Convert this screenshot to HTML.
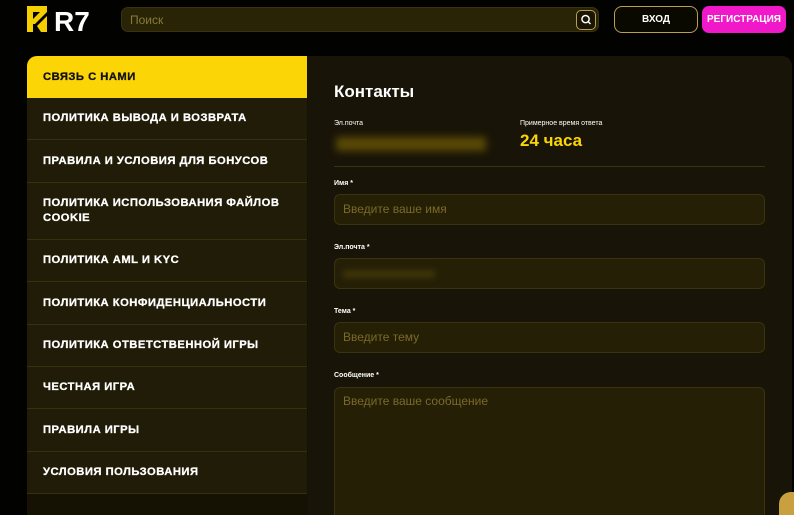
<!DOCTYPE html>
<html><head><meta charset="utf-8"><style>
*{box-sizing:border-box;margin:0;padding:0}
html{overflow:hidden;width:794px;height:515px}
body{width:794px;height:515px;overflow:hidden;background:#020200;font-family:"Liberation Sans","Noto Sans CJK SC",sans-serif;position:relative;color:#fff}
.abs{position:absolute}
.logo{left:27px;top:6px;width:66px;height:28px}
.search{left:121px;top:7px;width:478px;height:25px;border-radius:7px;background:#2a2406;border:1px solid #3a3210}
.search span{position:absolute;left:8px;top:5px;font-size:12px;color:#8a7a3a}
.sbtn{right:2px;top:2px;width:20px;height:20px;border:1px solid #b8a050;border-radius:5px;background:#1a1604}
.vhod{left:614px;top:6px;width:84px;height:27px;border:1px solid #b8a050;border-radius:8px;background:#0a0900;font-size:10px;font-weight:bold;text-align:center;line-height:25px}
.reg{left:702px;top:6px;width:84px;height:27px;border-radius:7px;background:#f018c8;font-size:10px;font-weight:bold;text-align:center;line-height:27px}
.side{left:27px;top:56px;width:281px;height:459px;background:#151204;border-radius:10px 0 0 0}
.item{position:absolute;left:0;width:280px;background:#211c07;border-bottom:1px solid #37300f;font-size:11.2px;font-weight:bold;letter-spacing:0.5px;padding-left:16px;display:flex;align-items:center;line-height:15px;-webkit-text-stroke:0.3px #fff}
.main{left:308px;top:56px;width:484px;height:459px;background:#181407;border-radius:0 10px 0 0}
.lbl{font-size:7px;font-weight:bold;color:#fff}
.inp{left:334px;width:431px;height:31px;border-radius:6px;background:#251f06;border:1px solid #3a3210;font-size:12px;color:#7a6a28;padding-left:8px;line-height:29px}
</style></head><body>
<svg class="abs logo" viewBox="0 0 66 28">
<path d="M0 0h20v6L8 18h-2v8H0z M6 6v7l7-7z" fill="#f5d000" fill-rule="evenodd"/>
<path d="M10 20l10-10v16h-6z" fill="#f5d000"/>
<text x="27" y="25" font-family="Liberation Sans" font-weight="bold" font-size="28" fill="#fff">R7</text>
</svg>
<div class="abs search"><span>Поиск</span>
<svg class="abs sbtn" viewBox="0 0 20 20"><circle cx="9.5" cy="9" r="4" stroke="#fff" stroke-width="1.6" fill="none"/><path d="M12.5 12l2.5 2.5" stroke="#fff" stroke-width="1.6"/></svg></div>
<div class="abs vhod">ВХОД</div>
<div class="abs reg">РЕГИСТРАЦИЯ</div>
<div class="abs side">
<div class="item" style="top:0;height:42px;background:#fcd506;color:#111;-webkit-text-stroke:0.3px #111;border:none;border-radius:10px 0 0 0">СВЯЗЬ С НАМИ</div>
<div class="item" style="top:42px;height:42px">ПОЛИТИКА ВЫВОДА И ВОЗВРАТА</div>
<div class="item" style="top:84px;height:43px">ПРАВИЛА И УСЛОВИЯ ДЛЯ БОНУСОВ</div>
<div class="item" style="top:127px;height:57px">ПОЛИТИКА ИСПОЛЬЗОВАНИЯ ФАЙЛОВ<br>COOKIE</div>
<div class="item" style="top:184px;height:42px">ПОЛИТИКА AML И KYC</div>
<div class="item" style="top:226px;height:43px">ПОЛИТИКА КОНФИДЕНЦИАЛЬНОСТИ</div>
<div class="item" style="top:269px;height:42px">ПОЛИТИКА ОТВЕТСТВЕННОЙ ИГРЫ</div>
<div class="item" style="top:311px;height:42px">ЧЕСТНАЯ ИГРА</div>
<div class="item" style="top:353px;height:43px">ПРАВИЛА ИГРЫ</div>
<div class="item" style="top:396px;height:42px">УСЛОВИЯ ПОЛЬЗОВАНИЯ</div>
</div>
<div class="abs main"></div>
<div class="abs" style="left:334px;top:82px;font-size:17px;font-weight:bold">Контакты</div>
<div class="abs lbl" style="left:334px;top:120px;font-weight:normal">Эл.почта</div>
<div class="abs" style="left:336px;top:137px;width:150px;height:14px;background:#5a4a06;filter:blur(4px)"></div>
<div class="abs lbl" style="left:520px;top:120px;font-weight:normal">Примерное время ответа</div>
<div class="abs" style="left:520px;top:131px;font-size:17px;font-weight:bold;color:#fcd506">24 часа</div>
<div class="abs" style="left:334px;top:166px;width:431px;height:1px;background:#3a3210"></div>
<div class="abs lbl" style="left:334px;top:180px">Имя *</div>
<div class="abs inp" style="top:194px">Введите ваше имя</div>
<div class="abs lbl" style="left:334px;top:244px">Эл.почта *</div>
<div class="abs inp" style="top:258px"><div style="position:absolute;left:8px;top:11px;width:92px;height:8px;background:#3e3408;filter:blur(3px)"></div></div>
<div class="abs lbl" style="left:334px;top:308px">Тема *</div>
<div class="abs inp" style="top:322px">Введите тему</div>
<div class="abs lbl" style="left:334px;top:372px">Сообщение *</div>
<div class="abs inp" style="top:387px;height:128px;line-height:26px;border-bottom:none;border-radius:6px 6px 0 0">Введите ваше сообщение</div>
<div class="abs" style="left:779px;top:492px;width:23px;height:23px;border-radius:12px 0 0 0;background:#c8a040"></div>
</body></html>
